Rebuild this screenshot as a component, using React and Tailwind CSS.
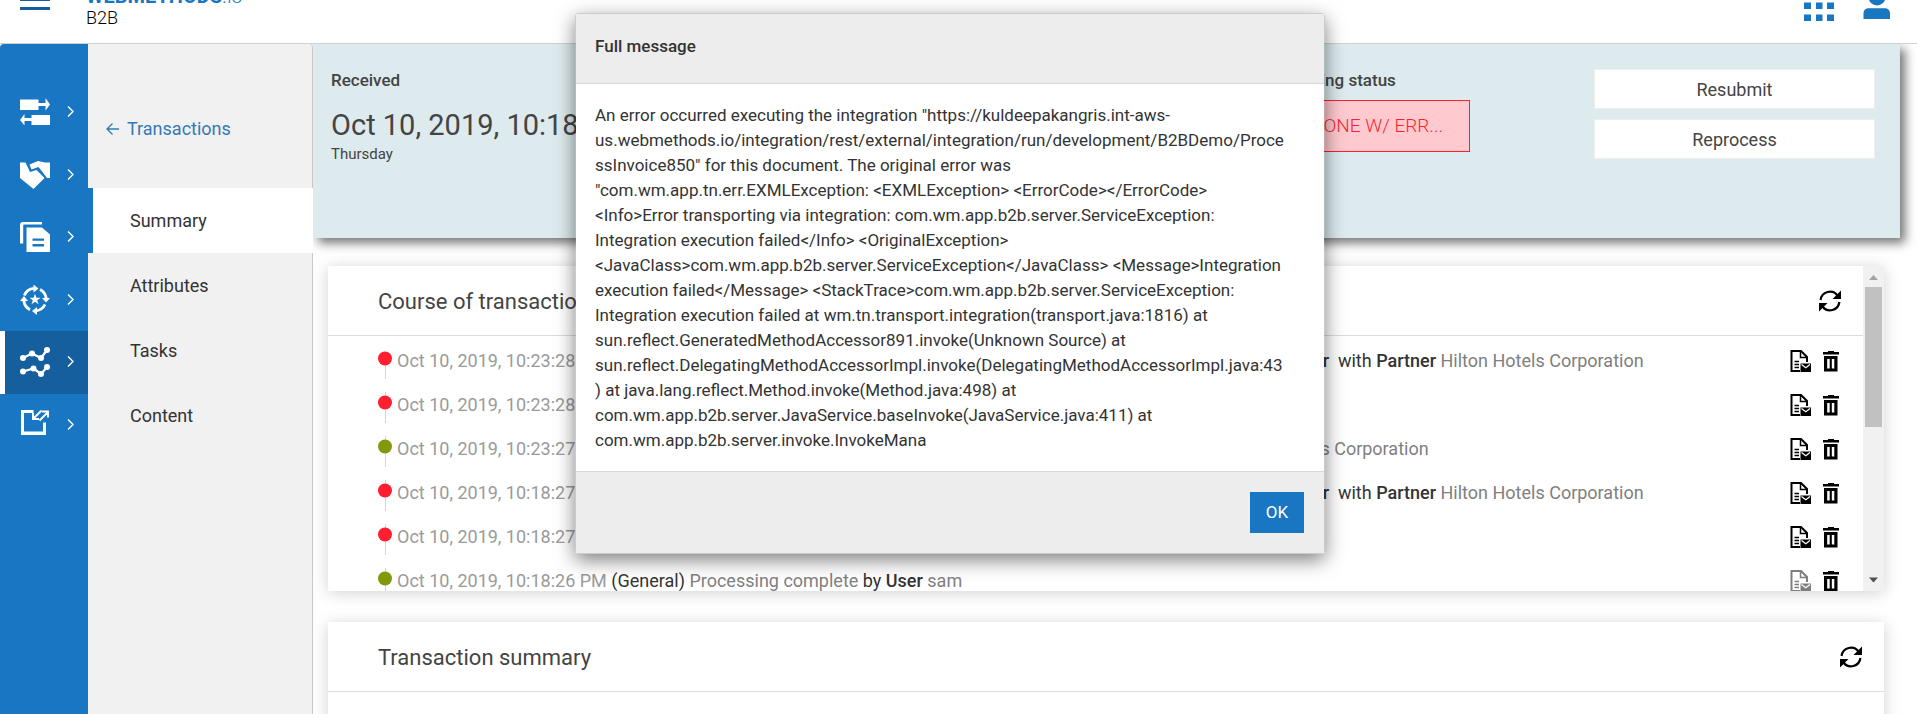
import React from "react";

const blue = "#1976c2";

const Chevron = () => (
  <svg className="w-2 h-3 shrink-0" viewBox="0 0 8 12" fill="none" stroke="white" strokeWidth="1.4">
    <path d="M1 0.500 L6 5.500 L1 10.500" />
  </svg>
);

const SideIcon = ({ children }) => (
  <svg className="size-[30px] shrink-0" viewBox="0 0 30 30" fill="white">{children}</svg>
);

const sideItems = [
  {
    label: "Channels",
    icon: (
      <SideIcon>
        <path d="M0 2.500h18.500V6h7V1L30 7.500 25.500 13.500V9h-7v4H0z" />
        <path d="M30 18v10H11.500V24h-7v4.500L0 23l4.500-6V21h7v-3z" />
      </SideIcon>
    ),
  },
  {
    label: "Partners",
    icon: (
      <SideIcon>
        <path d="M0 2.500h5.500l4.500 9.500 6.500-2 8 8-11 11L0 18z" />
        <path d="M9.500 4.500L18 1 25 2.500h5v15.500h-3L18.500 7 11.500 9.500z" />
      </SideIcon>
    ),
  },
  {
    label: "Documents",
    icon: (
      <SideIcon>
        <path d="M0 21.500V3a3 3 0 0 1 3-3h19v2.600H4.200a1 1 0 0 0-1 1V21.500z" />
        <path fillRule="evenodd" d="M6.500 5.500h15.500L30 12.500V30H6.500zM12.500 16.500v2.200h11.500v-2.200zM12.500 22v2.500h11.500V22z" />
      </SideIcon>
    ),
  },
  {
    label: "Rules",
    icon: (
      <SideIcon>
        <g fill="none" stroke="white" strokeWidth="2.800">
          <path d="M4.300 10.500A11.500 11.500 0 0 1 14 3.300" />
          <path d="M20 4.500A11.500 11.500 0 0 1 26.200 13.500" />
          <path d="M25 19.500A11.500 11.500 0 0 1 16 25.800" />
          <path d="M10 24.700A11.500 11.500 0 0 1 3.800 15.500" />
        </g>
        <path d="M13.500-.5l5 4-5 4zM22 13h8l-4 4.500zM17 22v8l-5-4zM0 16l4-5 4 5z" />
        <path d="M15 8.700l1.400 4h4.200l-3.400 2.500 1.300 4.100-3.500-2.500-3.500 2.500 1.300-4.100-3.400-2.500h4.200z" />
      </SideIcon>
    ),
  },
  {
    label: "Monitoring",
    active: true,
    icon: (
      <SideIcon>
        <g fill="none" stroke="white" strokeWidth="2.200">
          <path d="M3 11l9-4.500 9 4.500 6-8" />
          <path d="M3 24.500l10.500-3 7.500 5.500L27 20" />
        </g>
        <circle cx="3" cy="11" r="3" /><circle cx="12" cy="6.500" r="3" /><circle cx="21" cy="11" r="3" /><circle cx="27" cy="3" r="3" />
        <circle cx="3" cy="24.500" r="3" /><circle cx="13.500" cy="21.500" r="3" /><circle cx="21" cy="27" r="3" /><circle cx="27" cy="20" r="3" />
      </SideIcon>
    ),
  },
  {
    label: "Export",
    icon: (
      <SideIcon>
        <path d="M1 0h12.500v3H4v18.500h19V12.500h3V25H1z" />
        <g fill="none" stroke="white" strokeWidth="1.900">
          <path d="M21.500 .5L13.500 8.500M13 3v6h6M19.500 10.500L28 2M22 1.500h6v6" />
        </g>
      </SideIcon>
    ),
  },
];

const tabs = ["Summary", "Attributes", "Tasks", "Content"];

const Refresh = () => (
  <svg className="size-[22px]" viewBox="0 0 22 22">
    <g fill="none" stroke="black" strokeWidth="2.200">
      <path d="M1.600 10A9.400 9.400 0 0 1 18.500 5.500" />
      <path d="M20.400 12A9.400 9.400 0 0 1 3.500 16.500" />
    </g>
    <path d="M22 .5v8.500h-8.500l3-3zM0 21.500V13h8.500l-3 3z" />
  </svg>
);

const Doc = () => (
  <svg className="w-[21px] h-[22px]" viewBox="0 0 21 22">
    <g fill="none" stroke="black" strokeWidth="2">
      <path d="M10 21H1.500V1H11l6 6v5" />
      <path d="M10.500 1.500V7.500H16.500" strokeWidth="1.500" />
      <path d="M4.500 11.500h4.500M4.500 14.500h4.500M4.500 17.500h4.500" strokeWidth="1.500" />
    </g>
    <path d="M10.500 13.500h10.500V22H10.500z" />
    <path d="M11.500 14.500l4.300 3.200 4.200-3.200" fill="none" stroke="white" strokeWidth="1.300" />
  </svg>
);

const Trash = () => (
  <svg className="w-4 h-[22px]" viewBox="0 0 16 22">
    <path d="M5 1h6v1H16v2.500H0V2h5z" />
    <path fillRule="evenodd" d="M1 6h13.500v15.500H1zM4.200 9v9.500h2.500V9zM8.800 9v9.500h2.500V9z" />
  </svg>
);

const Dark = ({ children }) => <span className="text-[#333]">{children}</span>;
const Strong = ({ children }) => <b className="font-medium text-[#333]">{children}</b>;

const events = [
  { time: "Oct 10, 2019, 10:23:28 PM", text: "Unable to process the document", bad: true, by: true, partner: true, lead: "w-[932px]" },
  { time: "Oct 10, 2019, 10:23:28 PM", text: "Integration execution failed", bad: true },
  { time: "Oct 10, 2019, 10:23:27 PM", text: "Processing started", partner: true, lead: "w-[717px]" },
  { time: "Oct 10, 2019, 10:18:27 PM", text: "Unable to process the document", bad: true, by: true, partner: true, lead: "w-[932px]" },
  { time: "Oct 10, 2019, 10:18:27 PM", text: "Integration execution failed", bad: true },
  { time: "Oct 10, 2019, 10:18:26 PM", text: "Processing complete", user: "sam", faded: true },
];

const message =
  'An error occurred executing the integration "https://kuldeepakangris.int-aws-us.webmethods.io/integration/rest/external/integration/run/development/B2BDemo/ProcessInvoice850" for this document. The original error was "com.wm.app.tn.err.EXMLException: <EXMLException> <ErrorCode></ErrorCode> <Info>Error transporting via integration: com.wm.app.b2b.server.ServiceException: Integration execution failed</Info> <OriginalException> <JavaClass>com.wm.app.b2b.server.ServiceException</JavaClass> <Message>Integration execution failed</Message> <StackTrace>com.wm.app.b2b.server.ServiceException: Integration execution failed at wm.tn.transport.integration(transport.java:1816) at sun.reflect.GeneratedMethodAccessor891.invoke(Unknown Source) at sun.reflect.DelegatingMethodAccessorImpl.invoke(DelegatingMethodAccessorImpl.java:43) at java.lang.reflect.Method.invoke(Method.java:498) at com.wm.app.b2b.server.JavaService.baseInvoke(JavaService.java:411) at com.wm.app.b2b.server.invoke.InvokeMana';

function Header() {
  return (
    <header className="flex h-11 shrink-0 items-start justify-between overflow-hidden border-b border-[#cfd3cf] bg-white pl-5 pr-[25px]">
      <div className="flex gap-9">
        <button aria-label="Menu" className="h-[10px]">
          <svg className="block w-[30px] h-[10px]" viewBox="0 0 30 10" fill="#155f9f">
            <path d="M0 0h30v1H0zM0 7h30v3H0z" />
          </svg>
        </button>
        <div className="-mt-[15px] text-black">
          <div className="text-xl leading-[22px] text-[#1976c2]"><b>WEBMETHODS</b><span className="font-light">.io</span></div>
          <div className="text-lg font-light leading-[22px]">B2B</div>
        </div>
      </div>
      <div className="flex gap-7">
        <button aria-label="Applications">
          <svg className="block w-[30px] h-[22px]" viewBox="0 0 30 22" fill={blue}>
            <path d="M0 2.500h7V9H0zM12 2.500h6.500V9H12zM23 2.500h7V9h-7zM0 14.500h7V21H0zM12 14.500h6.500V21H12zM23 14.500h7V21h-7z" />
          </svg>
        </button>
        <button aria-label="Account">
          <svg className="block w-[30px] h-[22px]" viewBox="0 0 30 22" fill={blue}>
            <circle cx="15" cy="-3" r="8.500" />
            <path d="M1.500 19v-5.500c0-3 2-5.200 5-5.200h16.500c3 0 5 2.200 5 5.200V19z" />
          </svg>
        </button>
      </div>
    </header>
  );
}

function Sidebar() {
  return (
    <nav className="w-[88px] shrink-0 rounded-tl bg-[#1976c2] pt-[37px]">
      <ul className="grid h-[375px] grid-rows-6">
        {sideItems.map((it) => (
          <li key={it.label} className="grid">
            <a
              href="#"
              aria-label={it.label}
              className={
                it.active
                  ? "flex items-center gap-[17px] border-l-[5px] border-white bg-[#155f9f] pl-[15px]"
                  : "flex items-center gap-[17px] pl-5"
              }
            >
              {it.icon}
              <Chevron />
            </a>
          </li>
        ))}
      </ul>
    </nav>
  );
}

function SubNav() {
  return (
    <nav className="flex w-[225px] shrink-0 flex-col bg-[#f1f1f1] text-lg">
      <a href="#" className="flex h-36 items-center gap-2 rounded-tr border-r border-[#c8c8c8] pl-[18px] pt-[26px] text-[#337ab7]">
        <svg className="size-[13px]" viewBox="0 0 13 13" fill="none" stroke="currentColor" strokeWidth="1.300">
          <path d="M13 6H1M6.500 .5L1 6l5.500 5.500" />
        </svg>
        Transactions
      </a>
      {tabs.map((t, i) => (
        <a
          key={t}
          href="#"
          className={
            i === 0
              ? "flex h-[65px] items-center border-l-[5px] border-[#1976c2] bg-white pl-[37px]"
              : "flex h-[65px] items-center border-r border-[#c8c8c8] pl-[42px]"
          }
        >
          {t}
        </a>
      ))}
      <div className="flex-1 border-r border-[#c8c8c8]" />
    </nav>
  );
}

function Overview() {
  return (
    <section className="flex h-[194px] shrink-0 justify-between bg-[#ddeaee] pl-[18px] pr-[25px] pt-[25px] text-[#444] shadow-[5px_5px_10px_rgba(0,0,0,0.55)]">
      <div>
        <h3 className="font-medium leading-[22px]">Received</h3>
        <p className="mt-4 text-[29px] leading-9">Oct 10, 2019, 10:18:26 PM</p>
        <p className="text-[15px] leading-[22px]">Thursday</p>
      </div>
      <div className="flex gap-[124px]">
        <div className="w-[211px]">
          <h3 className="font-medium leading-[22px]">Processing status</h3>
          <p className="mt-[9px] flex h-[52px] items-center justify-end border border-[#ff1f2e] bg-[#ffcacf] pr-[26px] text-[19px] font-light text-[#ff1f2e]">
            DONE W/ ERR...
          </p>
        </div>
        <div className="flex w-[281px] flex-col gap-[10px] text-lg">
          <button className="h-10 border border-[#eee] bg-white pt-px">Resubmit</button>
          <button className="h-10 border border-[#eee] bg-white pt-px">Reprocess</button>
        </div>
      </div>
    </section>
  );
}

function CardHeader({ title }) {
  return (
    <div className="flex h-[70px] items-center justify-between border-b border-[#dcdcdc] pl-[50px] pr-[22px]">
      <h2 className="pt-[2px] text-[22px] text-[#444]">{title}</h2>
      <button aria-label={"Refresh " + title}><Refresh /></button>
    </div>
  );
}

function Event({ event: e, first }) {
  return (
    <li className="flex h-[31px] items-start pl-[50px] pr-6">
      <svg className="h-[31px] w-[14px] shrink-0" viewBox="0 0 14 31">
        <path d={first ? "M7.500 10V31" : "M7.500 0V31"} stroke="#d5d5d5" />
        <circle cx="7" cy="10.500" r="7" fill={e.bad ? "#ff1f2e" : "#84980b"} />
      </svg>
      <p className="ml-[5px] flex min-w-0 flex-1 whitespace-pre text-lg leading-[26px] text-[#808080]">
        <span className={e.lead ? "flex justify-between " + e.lead : ""}>
          <span className="min-w-0 truncate">
            <span className="text-[#9a9a9a]">{e.time}</span> <Dark>(General)</Dark> {e.text}
          </span>
          {e.by && <span><Dark>by</Dark> <Strong>User</Strong></span>}
        </span>
        {e.partner && <span>{"  "}<Dark>with</Dark> <Strong>Partner</Strong> Hilton Hotels Corporation</span>}
        {e.user && <span> <Dark>by</Dark> <Strong>User</Strong> {e.user}</span>}
      </p>
      <div className="flex gap-3 pt-[2px]">
        <button aria-label="View message" className={e.faded ? "opacity-50" : ""}><Doc /></button>
        <button aria-label="Delete entry"><Trash /></button>
      </div>
    </li>
  );
}

function Course() {
  return (
    <section className="ml-[15px] mr-4 mt-7 flex h-[325px] shrink-0 bg-white shadow-[0_2px_15px_rgba(0,0,0,0.18)]">
      <div className="min-w-0 flex-1 overflow-hidden">
        <CardHeader title="Course of transaction" />
        <ul className="flex flex-col gap-[13px] pt-3">
          {events.map((e, i) => <Event key={i} event={e} first={i === 0} />)}
        </ul>
      </div>
      <div className="flex w-[21px] flex-col items-center bg-[#f1f1f1]">
        <svg className="w-[21px] h-[21px]" viewBox="0 0 21 21" fill="#a3a3a3"><path d="M6 14h9l-4.500-5z" /></svg>
        <div className="h-[140px] w-[17px] bg-[#c1c1c1]" />
        <svg className="mt-auto w-[21px] h-[21px]" viewBox="0 0 21 21" fill="#505050"><path d="M6 7.500h9l-4.500 5z" /></svg>
      </div>
    </section>
  );
}

function Dialog() {
  return (
    <div className="absolute inset-0 flex items-start justify-center pr-[17px] pt-[13px]">
      <div role="dialog" aria-label="Full message" className="w-[750px] rounded-[3px] border border-black/20 bg-clip-padding shadow-[0_6px_19px_rgba(0,0,0,0.5)]">
        <h1 className="flex h-[70px] items-center border-b border-[#d8d8d8] bg-[#ededed] px-[19px] pb-1 font-medium">Full message</h1>
        <p className="bg-white pb-[18px] pl-[19px] pr-[38px] pt-[19px] leading-[25px] wrap-anywhere">{message}</p>
        <div className="flex justify-end border-t border-[#d8d8d8] bg-[#ededed] px-5 py-5">
          <button className="h-[41px] w-[54px] bg-[#1976c2] text-white">OK</button>
        </div>
      </div>
    </div>
  );
}

export default function App() {
  return (
    <div className="relative flex h-screen flex-col overflow-hidden bg-white font-['Roboto',sans-serif] text-[17px] text-[#333]">
      <Header />
      <div className="flex min-h-0 flex-1">
        <Sidebar />
        <SubNav />
        <main className="flex min-w-0 flex-1 flex-col overflow-hidden pr-[17px]">
          <Overview />
          <Course />
          <section className="ml-[15px] mr-4 mt-[31px] h-[300px] shrink-0 bg-white shadow-[0_2px_15px_rgba(0,0,0,0.18)]">
            <CardHeader title="Transaction summary" />
          </section>
        </main>
      </div>
      <Dialog />
    </div>
  );
}
